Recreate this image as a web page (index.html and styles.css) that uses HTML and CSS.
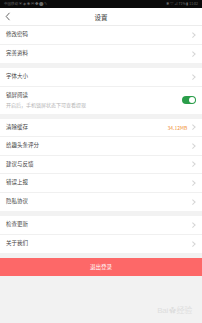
FILE: index.html
```html
<!DOCTYPE html>
<html>
<head>
<meta charset="utf-8">
<link rel="stylesheet" href="styles.css">
</head>
<body>
<div class="status">
  <span class="st-left">中国移动 ▣ ◈ ◉ ✉ ◆ ⬤ ✎</span>
  <span class="st-right">✱ ▽ ⊿ 71% ▮ 11:02</span>
</div>
<div class="nav">
  <svg class="back" width="6" height="9" viewBox="0 0 6 9"><polyline points="4.5,0.8 1.2,4.5 4.5,8.2" fill="none" stroke="#555" stroke-width="0.9"/></svg>
  <span class="title">设置</span>
</div>

<div class="group">
  <div class="row"><span class="label">修改密码</span><span class="chev"></span></div>
  <div class="row"><span class="label">完善资料</span><span class="chev"></span></div>
</div>

<div class="group">
  <div class="row"><span class="label">字体大小</span><span class="chev"></span></div>
  <div class="row tall">
    <div class="stack">
      <span class="label">锁屏阅读</span>
      <span class="sub">开启后，手机锁屏状态下可查看提现</span>
    </div>
    <span class="toggle"><span class="knob"></span></span>
  </div>
</div>

<div class="group">
  <div class="row"><span class="label">清除缓存</span><span class="value">34.12MB</span><span class="chev"></span></div>
  <div class="row"><span class="label">给趣头条评分</span><span class="chev"></span></div>
  <div class="row"><span class="label">建议与反馈</span><span class="chev"></span></div>
  <div class="row"><span class="label">错误上报</span><span class="chev"></span></div>
  <div class="row"><span class="label">隐私协议</span><span class="chev"></span></div>
</div>

<div class="group">
  <div class="row"><span class="label">检查更新</span><span class="chev"></span></div>
  <div class="row"><span class="label">关于我们</span><span class="chev"></span></div>
</div>

<div class="logout">退出登录</div>

<div class="watermark">Bai<span class="paw">✿</span>经验</div>
</body>
</html>
```

FILE: styles.css
```css
html, body {
  margin: 0;
  padding: 0;
}
body {
  background: #f2f2f2;
  font-family: "Noto Sans CJK SC", "Noto Sans", sans-serif;
  width: 202px;
  height: 323px;
  overflow: hidden;
  position: relative;
}
.status {
  height: 8px;
  background: #0a0a0a;
  display: flex;
  justify-content: space-between;
  align-items: center;
  padding: 0 4px;
  font-size: 3.5px;
  color: #6a6a6a;
  line-height: 1;
}
.nav {
  height: 17px;
  background: #fff;
  border-bottom: 1px solid #ececec;
  display: flex;
  align-items: center;
  justify-content: center;
  position: relative;
}
.back {
  position: absolute;
  left: 5px;
  top: 4px;
}
.title {
  font-size: 6.5px;
  color: #333;
}
.group {
  background: #fff;
  margin-bottom: 5px;
}
.row {
  height: 18.5px;
  box-sizing: border-box;
  display: flex;
  align-items: center;
  padding: 0 6px;
  border-bottom: 1px solid #f0f0f0;
}
.row:last-child {
  border-bottom: none;
}
.row.tall {
  height: 27px;
  padding-right: 6px;
}
.label {
  font-size: 5.5px;
  color: #444;
  flex: 1;
  line-height: 1;
}
.stack {
  flex: 1;
  display: flex;
  flex-direction: column;
  gap: 4px;
}
.sub {
  font-size: 5px;
  color: #b4b4b4;
  line-height: 1;
}
.value {
  font-size: 5px;
  color: #f0913a;
  margin-right: 4px;
}
.chev {
  width: 2.6px;
  height: 2.6px;
  border-top: 0.6px solid #d4d4d4;
  border-right: 0.6px solid #d4d4d4;
  transform: rotate(45deg);
  margin-right: 1px;
}
.toggle {
  width: 14px;
  height: 8px;
  border-radius: 4px;
  background: #2a9d4a;
  display: flex;
  align-items: center;
  justify-content: flex-end;
  padding: 0 1px;
  box-sizing: border-box;
}
.knob {
  width: 6px;
  height: 6px;
  border-radius: 50%;
  background: #fff;
}
.logout {
  margin-top: 3px;
  height: 18px;
  background: #fd6868;
  color: #fff;
  font-size: 5.5px;
  display: flex;
  align-items: center;
  justify-content: center;
}
.watermark {
  position: absolute;
  right: 10px;
  bottom: 8px;
  font-family: "Liberation Sans", "Noto Sans CJK SC", sans-serif;
  font-size: 8px;
  color: #dedede;
  letter-spacing: -0.3px;
}
.paw {
  font-size: 7px;
  margin: 0 1px;
}
```
